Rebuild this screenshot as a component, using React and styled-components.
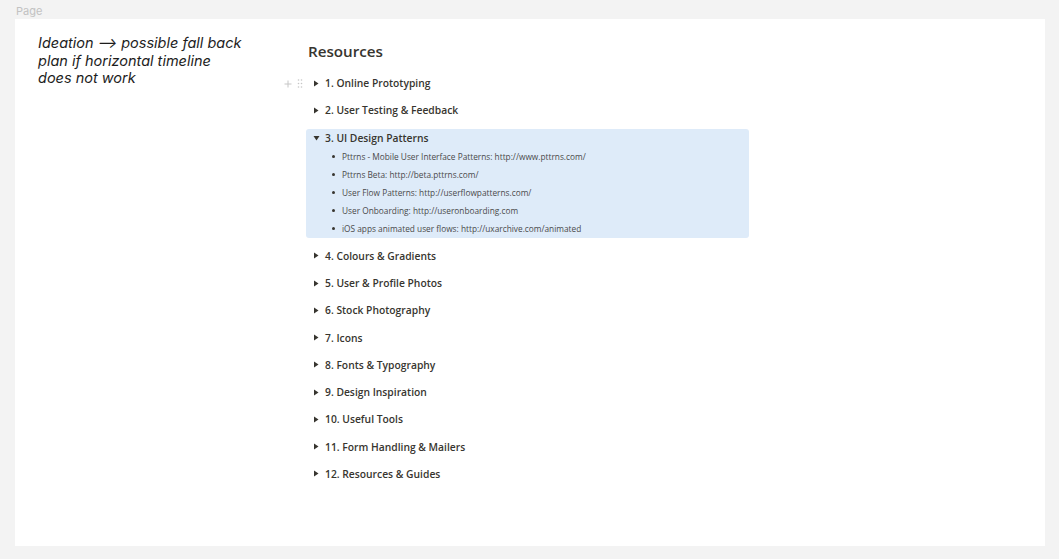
import React from "react";
import styled, { createGlobalStyle } from "styled-components";

const Global = createGlobalStyle`
  html, body { margin: 0; padding: 0; background: #f3f3f3; }
  body { font-family: "Open Sans", "Noto Sans", sans-serif; }
`;

const Shell = styled.div`
  width: 1059px;
  height: 559px;
  background: #f3f3f3;
  padding: 3px 14px 13px 15px;
  box-sizing: border-box;
  display: flex;
  flex-direction: column;
`;

const PageLabel = styled.div`
  font-family: Inter, sans-serif;
  font-size: 11px;
  line-height: 16px;
  color: #c2c2c2;
  padding-left: 1px;
  height: 16px;
`;

const Card = styled.div`
  flex: 1;
  background: #ffffff;
  display: grid;
  grid-template-columns: 268px 443px;
  padding: 15px 0 0 23px;
  box-sizing: border-box;
`;

const Note = styled.p`
  margin: 0;
  width: 210px;
  font-family: Inter, sans-serif;
  font-style: italic;
  font-size: 14.5px;
  line-height: 17.5px;
  color: #1d1d1d;
`;

const Resources = styled.div`
  display: flex;
  flex-direction: column;
`;

const Heading = styled.h2`
  margin: 7px 0 13px 2px;
  font-size: 15.2px;
  line-height: 20px;
  font-weight: 600;
  color: #37352f;
`;

const Blocks = styled.div`
  display: flex;
  flex-direction: column;
  gap: 9.27px;
`;

const Block = styled.div`
  position: relative;
  border-radius: 3px;
  background: ${(p) => (p.$active ? "#deebf9" : "transparent")};
`;

const ToggleRow = styled.div`
  display: flex;
  align-items: center;
  height: 18px;
  padding-left: 7px;
  font-size: 10.3px;
  font-weight: 600;
  color: #37352f;
`;

const Arrow = styled.span`
  width: 12px;
  display: flex;
  align-items: center;
  svg { display: block; }
`;

const Handles = styled.div`
  position: absolute;
  left: -22px;
  top: 5px;
  display: flex;
  gap: 5px;
  align-items: center;
  color: #c6c6c6;
  svg { display: block; }
`;

const BulletList = styled.ul`
  margin: 1px 0 0 0;
  padding: 0 0 0 26px;
  list-style: none;
`;

const BulletItem = styled.li`
  display: flex;
  align-items: center;
  height: 18px;
  font-size: 8.3px;
  color: #4a4a4a;
  &::before {
    content: "";
    width: 3px;
    height: 3px;
    border-radius: 50%;
    background: #37352f;
    margin-right: 7px;
    flex: none;
  }
`;

const Tri = ({ open }) =>
  open ? (
    <svg width="7" height="6" viewBox="0 0 7 6">
      <path d="M0.5 1 L6.5 1 L3.5 5.5 Z" fill="#37352f" />
    </svg>
  ) : (
    <svg width="6" height="7" viewBox="0 0 6 7">
      <path d="M1 0.5 L5.5 3.5 L1 6.5 Z" fill="#37352f" />
    </svg>
  );

const items = [
  "1. Online Prototyping",
  "2. User Testing & Feedback",
  "3. UI Design Patterns",
  "4. Colours & Gradients",
  "5. User & Profile Photos",
  "6. Stock Photography",
  "7. Icons",
  "8. Fonts & Typography",
  "9. Design Inspiration",
  "10. Useful Tools",
  "11. Form Handling & Mailers",
  "12. Resources & Guides",
];

const patterns = [
  "Pttrns - Mobile User Interface Patterns: http://www.pttrns.com/",
  "Pttrns Beta: http://beta.pttrns.com/",
  "User Flow Patterns: http://userflowpatterns.com/",
  "User Onboarding: http://useronboarding.com",
  "iOS apps animated user flows: http://uxarchive.com/animated",
];

export default function App() {
  return (
    <>
      <Global />
      <Shell>
        <PageLabel>Page</PageLabel>
        <Card>
          <Note>Ideation ⟶ possible fall back plan if horizontal timeline does not work</Note>
          <Resources>
            <Heading>Resources</Heading>
            <Blocks>
              {items.map((t, i) => {
                const open = i === 2;
                return (
                  <Block key={t} $active={open}>
                    {i === 0 && (
                      <Handles>
                        <svg width="8" height="8" viewBox="0 0 8 8">
                          <path d="M4 0.5 V7.5 M0.5 4 H7.5" stroke="currentColor" strokeWidth="1" />
                        </svg>
                        <svg width="6" height="9" viewBox="0 0 6 9">
                          {[1, 4.5, 8].map((y) =>
                            [1.5, 4.5].map((x) => (
                              <circle key={`${x}-${y}`} cx={x} cy={y} r="0.8" fill="currentColor" />
                            ))
                          )}
                        </svg>
                      </Handles>
                    )}
                    <ToggleRow>
                      <Arrow>
                        <Tri open={open} />
                      </Arrow>
                      {t}
                    </ToggleRow>
                    {open && (
                      <BulletList>
                        {patterns.map((p) => (
                          <BulletItem key={p}>{p}</BulletItem>
                        ))}
                      </BulletList>
                    )}
                  </Block>
                );
              })}
            </Blocks>
          </Resources>
        </Card>
      </Shell>
    </>
  );
}
